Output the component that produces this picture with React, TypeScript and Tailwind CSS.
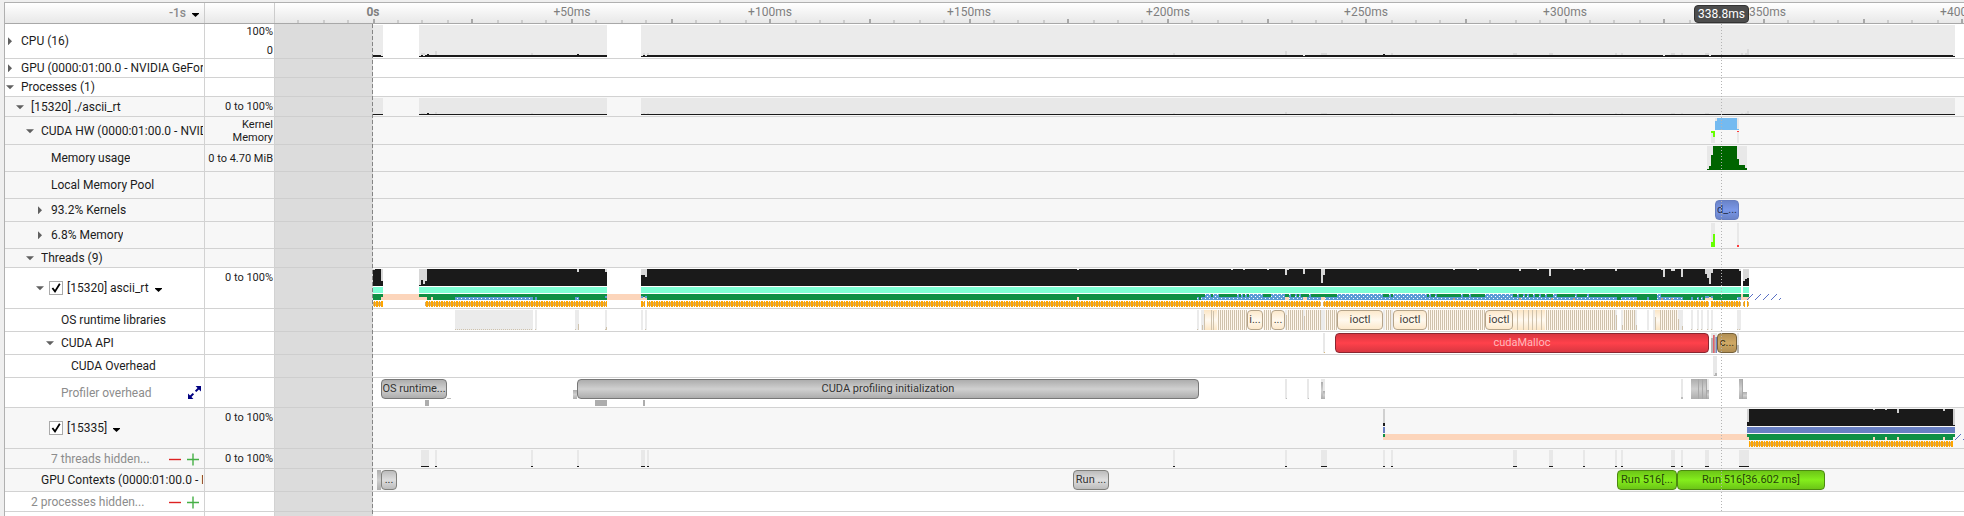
import React, { useState } from "react";

/** Canvas x of the moment 0s; every span below is given in canvas units. */
const ORIGIN = 373;
const UNITS_PER_50MS = 198.67;

type Span = [number, number];
/** x, width, y, height */
type Box = [number, number, number, number];

const Rects = ({ boxes, fill }: { boxes: Box[]; fill: string }) => (
  <g fill={fill}>
    {boxes.map(([x, w, y, h], i) => (
      <rect key={i} x={x} y={y} width={w} height={h} />
    ))}
  </g>
);

const Spans = ({ spans, y, h, fill }: { spans: Span[]; y: number; h: number; fill: string }) => (
  <g fill={fill}>
    {spans.map(([a, b], i) => (
      <rect key={i} x={a} y={y} width={b - a} height={h} />
    ))}
  </g>
);

const Plot = ({ children }: { children: React.ReactNode }) => (
  <svg className="absolute inset-0 h-full w-full" shapeRendering="crispEdges" aria-hidden="true">
    <g transform={`translate(${-ORIGIN} 0)`}>{children}</g>
  </svg>
);

/* ---------- event blocks ---------- */

const tones = {
  grey: "border-[#777777] bg-linear-to-b from-[#adadad] via-[#d0d0d0] to-[#adadad] text-[#333333]",
  light: "border-[#80807c] bg-linear-to-b from-[#bcbcbc] via-[#dedede] to-[#bcbcbc] text-[#333333]",
  cream: "border-[#b5a48a] bg-linear-to-b from-[#fce9cc] via-[#fff9ef] to-[#fce9cc] text-[#44403a]",
  red: "border-[#8a2630] bg-linear-to-b from-[#d93640] via-[#ff414b] to-[#d93640] text-[#ffb9bd]",
  brown: "border-[#75603a] bg-linear-to-b from-[#b18f54] via-[#d0a965] to-[#b18f54] text-[#3f3319]",
  blue: "border-[#667dc0] bg-linear-to-b from-[#6a83c8] via-[#7b98e8] to-[#6a83c8] text-[#25304d]",
  lime: "border-[#4c8a10] bg-linear-to-b from-[#6cc517] via-[#84ee1c] to-[#6cc517] text-[#26450a]",
};

type EventProps = { from: number; to: number; tone: keyof typeof tones; text: string };

const EventBlock = ({ from, to, tone, text }: EventProps) => (
  <div
    className={`absolute top-px flex h-5 items-center justify-center overflow-hidden rounded-[4px] border text-[11px] leading-4 whitespace-nowrap ${tones[tone]}`}
    style={{ left: from - ORIGIN, width: to - from }}
  >
    {text}
  </div>
);

/* ---------- lanes ---------- */

const busy: Span[] = [[373, 383], [419, 607], [641, 1955]];

const blips: Box[] = [
  [421, 4, 0, 2], [435, 2, 0, 4], [531, 2, 0, 2], [643, 2, 0, 2], [647, 2, 0, 2], [1173, 2, 0, 2],
  [1285, 2, 0, 4], [1321, 6, 0, 2], [1391, 2, 0, 2], [1513, 4, 0, 2], [1549, 4, 0, 2],
  [1615, 2, 0, 2], [1621, 2, 0, 2], [1671, 4, 0, 2], [1681, 2, 0, 2], [1705, 4, 0, 2],
  [1741, 2, 0, 2], [1745, 2, 0, 2], [1747, 2, 0, 6],
];

const CpuLane = () => (
  <Plot>
    <Spans spans={busy} y={1} h={32} fill="#ebebeb" />
    <Rects boxes={blips.map(([x, w, , h]): Box => [x, w, 31 - h, h])} fill="#d9d9d9" />
    <Spans spans={busy} y={32} h={1} fill="#1a1a1a" />
    <Spans
      spans={[[373, 381], [421, 423], [425, 607], [643, 645], [647, 1303], [1305, 1663], [1665, 1709], [1711, 1953]]}
      y={31}
      h={1}
      fill="#1a1a1a"
    />
    <Rects boxes={[[427, 2, 30, 1], [577, 2, 30, 1], [1383, 2, 30, 1]]} fill="#1a1a1a" />
  </Plot>
);

const ProcessLane = () => (
  <Plot>
    <Spans spans={busy} y={1} h={16} fill="#e8e8e8" />
    <Rects boxes={blips.map(([x, w, , h]): Box => [x, w, 17 - h / 2, h / 2])} fill="#d9d9d9" />
    <Spans spans={busy} y={17} h={1} fill="#1a1a1a" />
    <rect x={427} y={16} width={2} height={1} fill="#1a1a1a" />
  </Plot>
);

const CudaHwLane = () => (
  <Plot>
    <Rects boxes={[[1715, 2, 1, 12], [1737, 2, 1, 12], [1711, 4, 14, 12], [1737, 2, 14, 12]]} fill="#e8e8e8" />
    <Rects boxes={[[1715, 2, 4, 9], [1717, 20, 1, 12], [1737, 2, 12, 1]]} fill="#74baf0" />
    <Rects boxes={[[1711, 4, 14, 2], [1713, 2, 16, 4]]} fill="#66ff00" />
    <rect x={1737} y={14} width={2} height={1} fill="#ff3c3c" />
  </Plot>
);

const MemoryUsageLane = () => (
  <Plot>
    <rect x={1707} y={1} width={40} height={24} fill="#e8e8e8" />
    <path
      d="M1707 25V24H1709V21H1711V10H1713V1H1737V14H1739V20H1745V23H1747V25Z"
      fill="#006400"
    />
  </Plot>
);

const MemoryOpsLane = () => (
  <Plot>
    <Rects boxes={[[1711, 4, 1, 24], [1737, 2, 1, 24]]} fill="#e8e8e8" />
    <Rects boxes={[[1711, 2, 20, 5], [1713, 2, 12, 13]]} fill="#66ff00" />
    <rect x={1737} y={23} width={2} height={2} fill="#ff3c3c" />
  </Plot>
);

/** Hatch marks drawn after a thread's last sample. */
const Hatches = ({ starts, top }: { starts: number[]; top: number }) => (
  <g stroke="#5a70c4" strokeWidth={1} shapeRendering="auto">
    {starts.map((x) => (
      <path key={x} d={`M${x} ${top + 6}L${x + 6} ${top}`} />
    ))}
  </g>
);

const ThreadPatterns = () => (
  <defs>
    <pattern id="samples" width={5} height={6} patternUnits="userSpaceOnUse" patternTransform="translate(1 33)">
      <rect y={1} width={5} height={4} fill="#d6ac62" />
      <rect x={0} width={2} height={6} fill="#ffa500" />
      <rect x={3} y={0} width={1} height={6} fill="#ffa500" />
    </pattern>
    <pattern id="io" width={4} height={4} patternUnits="userSpaceOnUse" patternTransform="translate(1 26)">
      <rect width={4} height={4} fill="#5b9bd5" />
      <rect x={0} y={0} width={1} height={1} fill="#ffffff" />
      <rect x={2} y={2} width={1} height={1} fill="#ffffff" />
    </pattern>
    <pattern id="calls" width={2} height={20} patternUnits="userSpaceOnUse" patternTransform="translate(1 1)">
      <rect width={1} height={20} fill="#fff8ee" />
      <rect x={1} width={1} height={20} fill="#cfc2ac" />
    </pattern>
    <pattern id="ticks" width={2} height={20} patternUnits="userSpaceOnUse" patternTransform="translate(1 1)">
      <rect width={1} height={20} fill="#cfc2ac" />
    </pattern>
    <linearGradient id="cream" x1="0" x2="0" y1="0" y2="1">
      <stop offset="0" stopColor="#fce6c5" />
      <stop offset="0.5" stopColor="#fffaf2" />
      <stop offset="1" stopColor="#fce6c5" />
    </linearGradient>
    <linearGradient id="steel" x1="0" x2="0" y1="0" y2="1">
      <stop offset="0" stopColor="#adadad" />
      <stop offset="0.5" stopColor="#cfcfcf" />
      <stop offset="1" stopColor="#adadad" />
    </linearGradient>
  </defs>
);

const mainRuns: Span[] = [[373, 383], [419, 607], [641, 1741], [1743, 1749]];

const mainDips: Box[] = [
  [373, 2, 1, 1], [381, 2, 1, 12], [419, 2, 1, 16], [421, 2, 1, 11], [423, 2, 1, 15], [425, 2, 1, 12],
  [577, 2, 1, 3], [605, 2, 1, 3], [641, 4, 1, 6], [645, 2, 1, 8], [1077, 2, 1, 1], [1231, 2, 1, 1],
  [1243, 2, 1, 1], [1267, 2, 1, 1], [1285, 2, 1, 6], [1287, 2, 1, 1], [1303, 2, 1, 5], [1321, 2, 1, 14],
  [1323, 2, 1, 6], [1453, 2, 1, 1], [1477, 2, 1, 1], [1519, 2, 1, 2], [1537, 2, 1, 1], [1549, 2, 1, 7],
  [1573, 2, 1, 1], [1583, 2, 1, 1], [1615, 2, 1, 2], [1661, 4, 1, 1], [1663, 2, 1, 8], [1671, 4, 1, 2],
  [1681, 2, 1, 8], [1705, 2, 1, 5], [1707, 2, 1, 9], [1709, 2, 1, 15], [1711, 2, 1, 4], [1739, 2, 1, 2],
  [1743, 2, 1, 12], [1745, 2, 1, 10], [1747, 2, 1, 9],
];

const MainThreadLane = () => (
  <Plot>
    <Spans spans={mainRuns} y={1} h={17} fill="#1a1a1a" />
    <Rects boxes={mainDips} fill="#d8d8d8" />
    <Spans spans={mainRuns} y={19} h={6} fill="#7fffd4" />
    <rect x={373} y={26} width={1376} height={6} fill="#fcd5bb" />
    <Spans spans={[[373, 381], [427, 431], [433, 607], [647, 1741]]} y={26} h={6} fill="#0f8f44" />
    <Spans spans={[[381, 383], [419, 433], [641, 647], [1743, 1749]]} y={26} h={3} fill="#0f8f44" />
    <Spans spans={[[1077, 1079], [1285, 1289], [1303, 1307], [1321, 1325], [1705, 1713], [1739, 1741]]} y={29} h={3} fill="#fcd5bb" />
    <Spans
      spans={[
        [455, 533], [535, 537], [575, 579], [1197, 1199], [1201, 1285], [1289, 1303], [1307, 1321], [1325, 1617],
        [1621, 1637], [1647, 1649], [1657, 1683], [1691, 1693], [1697, 1699], [1701, 1703], [1737, 1741],
      ]}
      y={29}
      h={3}
      fill="url(#io)"
    />
    <Spans spans={[[605, 607], [641, 643], [645, 647], [1711, 1713], [1705, 1709]]} y={28} h={2} fill="#5b9bd5" />
    <Spans
      spans={[
        [1205, 1211], [1213, 1219], [1237, 1239], [1241, 1243], [1245, 1247], [1249, 1263], [1271, 1285], [1289, 1291],
        [1295, 1297], [1299, 1301], [1309, 1311], [1337, 1383], [1389, 1391], [1393, 1427], [1429, 1431], [1435, 1437],
        [1461, 1463], [1469, 1471], [1485, 1513], [1517, 1519], [1523, 1525], [1527, 1529], [1533, 1535], [1539, 1541],
        [1545, 1547], [1553, 1557], [1575, 1577], [1587, 1589], [1657, 1661],
      ]}
      y={26}
      h={4}
      fill="url(#io)"
    />
    <Spans spans={[[1453, 1455], [1519, 1521], [1551, 1553], [1573, 1575], [1661, 1663], [1671, 1673]]} y={30} h={2} fill="#c79a80" />
    <Spans
      spans={[[373, 383], [425, 607], [641, 645], [647, 1321], [1323, 1709], [1711, 1741], [1743, 1745], [1747, 1749]]}
      y={33}
      h={6}
      fill="url(#samples)"
    />
    <Hatches starts={[1747, 1755, 1763, 1771]} top={26} />
    <path d="M1779 32L1781 30" stroke="#5a70c4" />
  </Plot>
);

const OsRuntimeLane = () => (
  <>
    <Plot>
      <Spans
        spans={[
          [455, 533], [535, 537], [575, 579], [605, 607], [641, 643], [645, 647], [1197, 1199], [1201, 1205],
          [1285, 1287], [1303, 1305], [1321, 1325], [1383, 1393], [1615, 1617], [1621, 1637], [1647, 1649],
          [1653, 1683], [1691, 1693], [1697, 1699], [1701, 1703], [1707, 1709], [1711, 1713], [1737, 1741],
        ]}
        y={1}
        h={20}
        fill="#ebebeb"
      />
      <Spans
        spans={[[455, 533], [535, 537], [575, 577], [605, 607], [645, 647], [1197, 1199], [1691, 1693], [1697, 1699], [1701, 1703], [1707, 1709], [1711, 1713], [1737, 1741]]}
        y={20}
        h={1}
        fill="url(#ticks)"
      />
      <Spans spans={[[1204, 1218], [1512, 1546], [1655, 1661]]} y={1} h={20} fill="url(#cream)" />
      <Spans
        spans={[[1217, 1247], [1263, 1271], [1287, 1303], [1305, 1321], [1325, 1337], [1385, 1391], [1427, 1485], [1545, 1615], [1623, 1635], [1660, 1678]]}
        y={1}
        h={20}
        fill="url(#calls)"
      />
      <Rects
        boxes={[
          [1202, 1, 16, 5], [1204, 1, 5, 16], [1211, 1, 1, 20], [1213, 1, 2, 19], [578, 1, 15, 6], [606, 1, 18, 3],
          [1517, 1, 1, 20], [1523, 1, 1, 20], [1528, 1, 1, 20], [1532, 1, 1, 20], [1536, 1, 1, 20], [1541, 1, 1, 20],
          [1286, 1, 6, 15], [1304, 1, 7, 14], [1616, 1, 6, 15], [1622, 1, 16, 5], [1636, 1, 16, 5],
          [1655, 1, 8, 13], [1678, 1, 10, 11], [1682, 1, 17, 4],
        ]}
        fill="#cfc2ac"
      />
    </Plot>
    <EventBlock from={1247} to={1263} tone="cream" text="i..." />
    <EventBlock from={1271} to={1285} tone="cream" text="..." />
    <EventBlock from={1337} to={1383} tone="cream" text="ioctl" />
    <EventBlock from={1393} to={1427} tone="cream" text="ioctl" />
    <EventBlock from={1485} to={1513} tone="cream" text="ioctl" />
  </>
);

const CudaApiLane = () => (
  <>
    <Plot>
      <Rects boxes={[[1323, 2, 1, 20], [1711, 6, 1, 20], [1737, 2, 1, 20]]} fill="#e8e8e8" />
      <rect x={1324} y={20} width={1} height={1} fill="#d9b878" />
      <Rects boxes={[[1711, 2, 6, 15], [1715, 1, 5, 16], [1737, 2, 13, 8]]} fill="#b5b5b5" />
      <rect x={1713} y={3} width={1} height={18} fill="#e8606a" />
      <rect x={1714} y={3} width={1} height={18} fill="#c98a90" />
      <rect x={1716} y={5} width={1} height={16} fill="#7186c8" />
    </Plot>
    <EventBlock from={1335} to={1709} tone="red" text="cudaMalloc" />
    <EventBlock from={1717} to={1737} tone="brown" text="c..." />
  </>
);

const CudaOverheadLane = () => (
  <Plot>
    <rect x={1713} y={1} width={4} height={20} fill="#e8e8e8" />
    <Rects boxes={[[1714, 1, 20, 1], [1715, 2, 18, 3]]} fill="#b5b5b5" />
  </Plot>
);

const ProfilerLane = () => (
  <>
    <Plot>
      <Rects boxes={[[1285, 2, 1, 20], [1307, 2, 1, 20], [1321, 4, 1, 20], [1681, 2, 1, 20], [1707, 2, 1, 20]]} fill="#e8e8e8" />
      <Rects boxes={[[1286, 1, 20, 1], [1308, 1, 20, 1], [1681, 2, 19, 2], [447, 4, 20, 1]]} fill="#bdbdbd" />
      <Rects
        boxes={[[573, 4, 12, 9], [1321, 2, 4, 17], [1323, 2, 13, 8], [1691, 16, 1, 20], [1707, 2, 12, 9], [1739, 4, 1, 20], [1743, 4, 14, 7]]}
        fill="url(#steel)"
      />
      <Rects boxes={[[1698, 1, 1, 20], [1702, 1, 1, 20], [1706, 1, 1, 20], [1742, 1, 1, 20]]} fill="#a8a8a8" />
      <Spans spans={[[425, 429], [595, 607], [643, 645]]} y={22} h={6} fill="#adadad" />
    </Plot>
    <EventBlock from={381} to={447} tone="grey" text="OS runtime..." />
    <EventBlock from={577} to={1199} tone="grey" text="CUDA profiling initialization" />
  </>
);

const WorkerThreadLane = () => (
  <Plot>
    <Rects
      boxes={[
        [1383, 2, 1, 14], [1747, 2, 1, 13], [1873, 2, 1, 1], [1885, 2, 1, 1], [1897, 2, 1, 4], [1943, 2, 1, 2], [1953, 2, 1, 16],
      ]}
      fill="#d0d0d0"
    />
    <Rects
      boxes={[
        [1383, 2, 15, 3], [1747, 2, 14, 4], [1749, 124, 1, 17], [1873, 2, 2, 16], [1875, 10, 1, 17], [1885, 2, 2, 16],
        [1887, 10, 1, 17], [1897, 2, 5, 13], [1899, 44, 1, 17], [1943, 2, 3, 15], [1945, 8, 1, 17], [1953, 2, 17, 1],
      ]}
      fill="#1a1a1a"
    />
    <Spans spans={[[1383, 1385], [1747, 1955]]} y={19} h={6} fill="#687fc2" />
    <Spans spans={[[1383, 1749]]} y={26} h={6} fill="#fcd5bb" />
    <Spans spans={[[1383, 1385], [1747, 1955]]} y={26} h={3} fill="#0f8f44" />
    <Spans spans={[[1749, 1953]]} y={29} h={3} fill="#0f8f44" />
    <Spans spans={[[1873, 1875], [1885, 1887], [1897, 1899], [1943, 1945]]} y={29} h={3} fill="#fcd5bb" />
    <rect x={1749} y={33} width={204} height={6} fill="url(#samples)" />
    <Hatches starts={[1955, 1963]} top={26} />
  </Plot>
);

const hiddenRuns: Span[] = [
  [421, 429], [435, 437], [531, 533], [577, 579], [641, 645], [647, 649], [1173, 1175], [1285, 1287], [1321, 1327],
  [1383, 1385], [1391, 1393], [1513, 1517], [1549, 1553], [1583, 1585], [1615, 1617], [1621, 1623], [1671, 1675],
  [1681, 1683], [1705, 1709], [1739, 1749],
];

const HiddenThreadsLane = () => (
  <Plot>
    <Spans spans={hiddenRuns} y={1} h={16} fill="#e8e8e8" />
    <Spans spans={hiddenRuns} y={17} h={1} fill="#1a1a1a" />
  </Plot>
);

const GpuContextsLane = () => (
  <>
    <Plot>
      <rect x={377} y={1} width={4} height={20} fill="url(#steel)" />
    </Plot>
    <EventBlock from={381} to={397} tone="light" text="..." />
    <EventBlock from={1073} to={1109} tone="light" text="Run ..." />
    <EventBlock from={1617} to={1677} tone="lime" text="Run 516[..." />
    <EventBlock from={1677} to={1825} tone="lime" text="Run 516[36.602 ms]" />
  </>
);

/* ---------- tree column ---------- */

const Expander = ({ open, name }: { open: boolean; name: string }) => (
  <button type="button" aria-label={name} aria-expanded={open} className="flex h-4 w-2 shrink-0 items-center justify-center">
    <svg width="8" height="8" viewBox="0 0 8 8" fill="#606060" aria-hidden="true">
      {open ? <path d="M0 2.3H8L4 6.3Z" /> : <path d="M2 0.3L6 4.3L2 8.3Z" />}
    </svg>
  </button>
);

const Caret = () => (
  <svg width="7" height="4" viewBox="0 0 7 4" fill="#000000" aria-hidden="true">
    <path d="M0 0H7V0.8L3.5 4L0 0.8Z" />
  </svg>
);

const HiddenControls = () => (
  <span className="ml-auto flex items-center gap-1 pr-[3px]">
    <button type="button" aria-label="Show fewer">
      <svg width="14" height="14" viewBox="0 0 14 14" fill="none" stroke="#dd2222" strokeWidth="1.4" aria-hidden="true">
        <path d="M1 7.5H13" />
      </svg>
    </button>
    <button type="button" aria-label="Show more">
      <svg width="14" height="14" viewBox="0 0 14 14" fill="none" stroke="#46b046" strokeWidth="1.4" aria-hidden="true">
        <path d="M1 7.5H13M7 1.5V13.5" />
      </svg>
    </button>
  </span>
);

const ExpandControl = () => (
  <button type="button" aria-label="Expand row" className="ml-auto pr-0.5">
    <svg width="13" height="13" viewBox="0 0 13 13" fill="#000080" stroke="#000080" aria-hidden="true">
      <path d="M7.6 0H13V5.4Z" stroke="none" />
      <path d="M0 7.6V13H5.4Z" stroke="none" />
      <path d="M11 2L7.6 5.4M5.4 7.6L2 11" strokeWidth="2" />
    </svg>
  </button>
);

const ThreadLabel = ({ name }: { name: string }) => {
  const [on, setOn] = useState(true);
  return (
    <span className="flex items-center gap-1.5">
      <label className="flex items-center gap-1">
        <span className="relative flex size-3.5">
          <input
            type="checkbox"
            checked={on}
            onChange={(e) => setOn(e.target.checked)}
            className="size-3.5 appearance-none border border-[#aaaaaa] bg-white"
          />
          {on && (
            <svg className="pointer-events-none absolute inset-0" width="14" height="14" viewBox="0 0 14 14" fill="none" stroke="#000000" aria-hidden="true">
              <path d="M3.4 7L6 10.4L10.8 2.8" strokeWidth="1.8" />
            </svg>
          )}
        </span>
        {name}
      </label>
      <button type="button" aria-label={`${name} menu`} className="pt-1">
        <Caret />
      </button>
    </span>
  );
};

const indents = ["pl-px", "pl-[11px]", "pl-[21px]", "pl-[31px]", "pl-[41px]", "pl-[51px]"];

type RowProps = {
  height: string;
  level: number;
  label: string;
  open?: boolean;
  thread?: boolean;
  muted?: boolean;
  white?: boolean;
  scale?: React.ReactNode;
  control?: React.ReactNode;
  lane?: React.ReactNode;
};

const Row = ({ height, level, label, open, thread, muted, white, scale, control, lane }: RowProps) => (
  <div role="row" className={`flex text-xs text-[#1c1c1c] ${height} ${white ? "bg-white" : "bg-[#f7f7f7]"}`}>
    <div
      role="rowheader"
      className={`flex w-50 shrink-0 items-center overflow-hidden border-r border-b border-[#d2d2d2] pr-px whitespace-nowrap ${indents[level]}`}
    >
      {open === undefined ? <span className="w-2 shrink-0" /> : <Expander open={open} name={label} />}
      {thread ? (
        <span className="pl-[5px]">
          <ThreadLabel name={label} />
        </span>
      ) : (
        <span className={`ml-[7px] overflow-hidden ${muted ? "text-[#8c8c8c]" : ""}`}>{label}</span>
      )}
      {control}
    </div>
    <div role="cell" className="w-17.5 shrink-0 border-r border-b border-[#d2d2d2] pr-px text-right text-[11px] leading-[13px]">
      {scale}
    </div>
    <div className="w-24.5 shrink-0 border-b border-[#cecece] bg-[#dcdcdc]" />
    <div role="cell" className="relative min-w-0 flex-1 overflow-hidden border-b border-[#d2d2d2]">
      {lane}
    </div>
  </div>
);

const Centered = ({ children }: { children: React.ReactNode }) => (
  <div className="flex h-full items-center justify-end">{children}</div>
);

/* ---------- ruler ---------- */

const ticks = Array.from({ length: 68 }, (_, i) => i - 3);
const marks = Array.from({ length: 9 }, (_, i) => i);

const Ruler = () => (
  <div className="relative flex-1 overflow-hidden">
    <svg className="absolute inset-0 h-full w-full" shapeRendering="crispEdges" aria-hidden="true">
      {ticks.map((n) => {
        const major = n % 4 === 0;
        return (
          <rect
            key={n}
            x={98 + 2 * Math.floor((n * UNITS_PER_50MS) / 16)}
            y={major ? 16 : 17}
            width={2}
            height={major ? 4 : 3}
            fill={major ? "#a8a8a8" : "#cccccc"}
          />
        );
      })}
    </svg>
    {marks.map((n) => (
      <span
        key={n}
        className={`absolute top-px -translate-x-1/2 text-xs leading-4 text-[#7f7f7f] ${n === 0 ? "font-bold" : ""}`}
        style={{ left: Math.round(98 + n * UNITS_PER_50MS) }}
      >
        {n === 0 ? "0s" : `+${n * 50}ms`}
      </span>
    ))}
    <span className="absolute top-[2px] left-[1419px] flex h-[18px] w-[55px] items-center justify-center rounded-[4px] border border-[#333333] bg-[#4d4d4d] text-xs text-white">
      338.8ms
    </span>
  </div>
);

export default function App() {
  return (
    <div className="flex min-h-screen flex-col overflow-hidden bg-[#efefef] pt-0.5 pl-1 font-['Roboto','Liberation_Sans',sans-serif]">
      <svg className="absolute size-0" aria-hidden="true">
        <ThreadPatterns />
      </svg>
      <div className="flex flex-1 flex-col border-t border-l border-[#b0b0b0] bg-white">
        <div className="flex h-[21px] border-b border-[#a8a8a8] bg-linear-to-b from-white to-[#e8e8e8]">
          <div className="flex w-50 shrink-0 items-center justify-end border-r border-[#cccccc]">
            <button type="button" className="flex items-center gap-1.5 pr-[5px] text-xs leading-4 font-medium text-[#8a8a8a]">
              -1s
              <span className="pt-1">
                <Caret />
              </span>
            </button>
          </div>
          <div className="w-17.5 shrink-0 border-r border-[#cccccc]" />
          <Ruler />
        </div>

        <div role="treegrid" aria-label="Timeline" className="relative flex flex-1 flex-col">
          <Row
            white
            height="h-[35px]"
            level={0}
            label="CPU (16)"
            open={false}
            scale={
              <div className="flex h-full flex-col justify-between py-px">
                <span>100%</span>
                <span>0</span>
              </div>
            }
            lane={<CpuLane />}
          />
          <Row white height="h-[19px]" level={0} label="GPU (0000:01:00.0 - NVIDIA GeFor" open={false} />
          <Row white height="h-[19px]" level={0} label="Processes (1)" open />
          <Row height="h-5" level={1} label="[15320] ./ascii_rt" open scale={<Centered>0 to 100%</Centered>} lane={<ProcessLane />} />
          <Row
            height="h-7"
            level={2}
            label="CUDA HW (0000:01:00.0 - NVID"
            open
            scale={
              <div className="pt-px">
                <div>Kernel</div>
                <div>Memory</div>
              </div>
            }
            lane={<CudaHwLane />}
          />
          <Row height="h-[27px]" level={3} label="Memory usage" scale={<Centered>0 to 4.70 MiB</Centered>} lane={<MemoryUsageLane />} />
          <Row height="h-[27px]" level={3} label="Local Memory Pool" />
          <Row
            height="h-[23px]"
            level={3}
            label="93.2% Kernels"
            open={false}
            lane={<EventBlock from={1715} to={1739} tone="blue" text="d_..." />}
          />
          <Row height="h-[27px]" level={3} label="6.8% Memory" open={false} lane={<MemoryOpsLane />} />
          <Row height="h-[19px]" level={2} label="Threads (9)" open />
          <Row
            white
            thread
            height="h-[41px]"
            level={3}
            label="[15320] ascii_rt"
            open
            scale={<div className="pt-[3px]">0 to 100%</div>}
            lane={<MainThreadLane />}
          />
          <Row white height="h-[23px]" level={4} label="OS runtime libraries" lane={<OsRuntimeLane />} />
          <Row white height="h-[23px]" level={4} label="CUDA API" open lane={<CudaApiLane />} />
          <Row white height="h-[23px]" level={5} label="CUDA Overhead" lane={<CudaOverheadLane />} />
          <Row white muted height="h-[30px]" level={4} label="Profiler overhead" control={<ExpandControl />} lane={<ProfilerLane />} />
          <Row
            thread
            height="h-[41px]"
            level={3}
            label="[15335]"
            scale={<div className="pt-[3px]">0 to 100%</div>}
            lane={<WorkerThreadLane />}
          />
          <Row
            muted
            height="h-5"
            level={3}
            label="7 threads hidden..."
            control={<HiddenControls />}
            scale={<Centered>0 to 100%</Centered>}
            lane={<HiddenThreadsLane />}
          />
          <Row height="h-[23px]" level={2} label="GPU Contexts (0000:01:00.0 - N" lane={<GpuContextsLane />} />
          <Row white muted height="h-5" level={1} label="2 processes hidden..." control={<HiddenControls />} />
          <div className="flex min-h-1 flex-1">
            <div className="w-50 border-r border-[#d2d2d2]" />
            <div className="w-17.5 border-r border-[#d2d2d2]" />
            <div className="w-24.5 bg-[#dcdcdc]" />
          </div>

          <svg className="pointer-events-none absolute inset-y-0 left-[367px] h-full w-px" aria-hidden="true">
            <path d="M0.5 0V2000" stroke="#858585" strokeDasharray="4 2" />
          </svg>
          <svg className="pointer-events-none absolute top-0 bottom-1 left-[1716px] w-px" height="488" aria-hidden="true">
            <path d="M0.5 0V488" stroke="#b4b4b4" strokeDasharray="1 2" />
          </svg>
        </div>
      </div>
    </div>
  );
}
